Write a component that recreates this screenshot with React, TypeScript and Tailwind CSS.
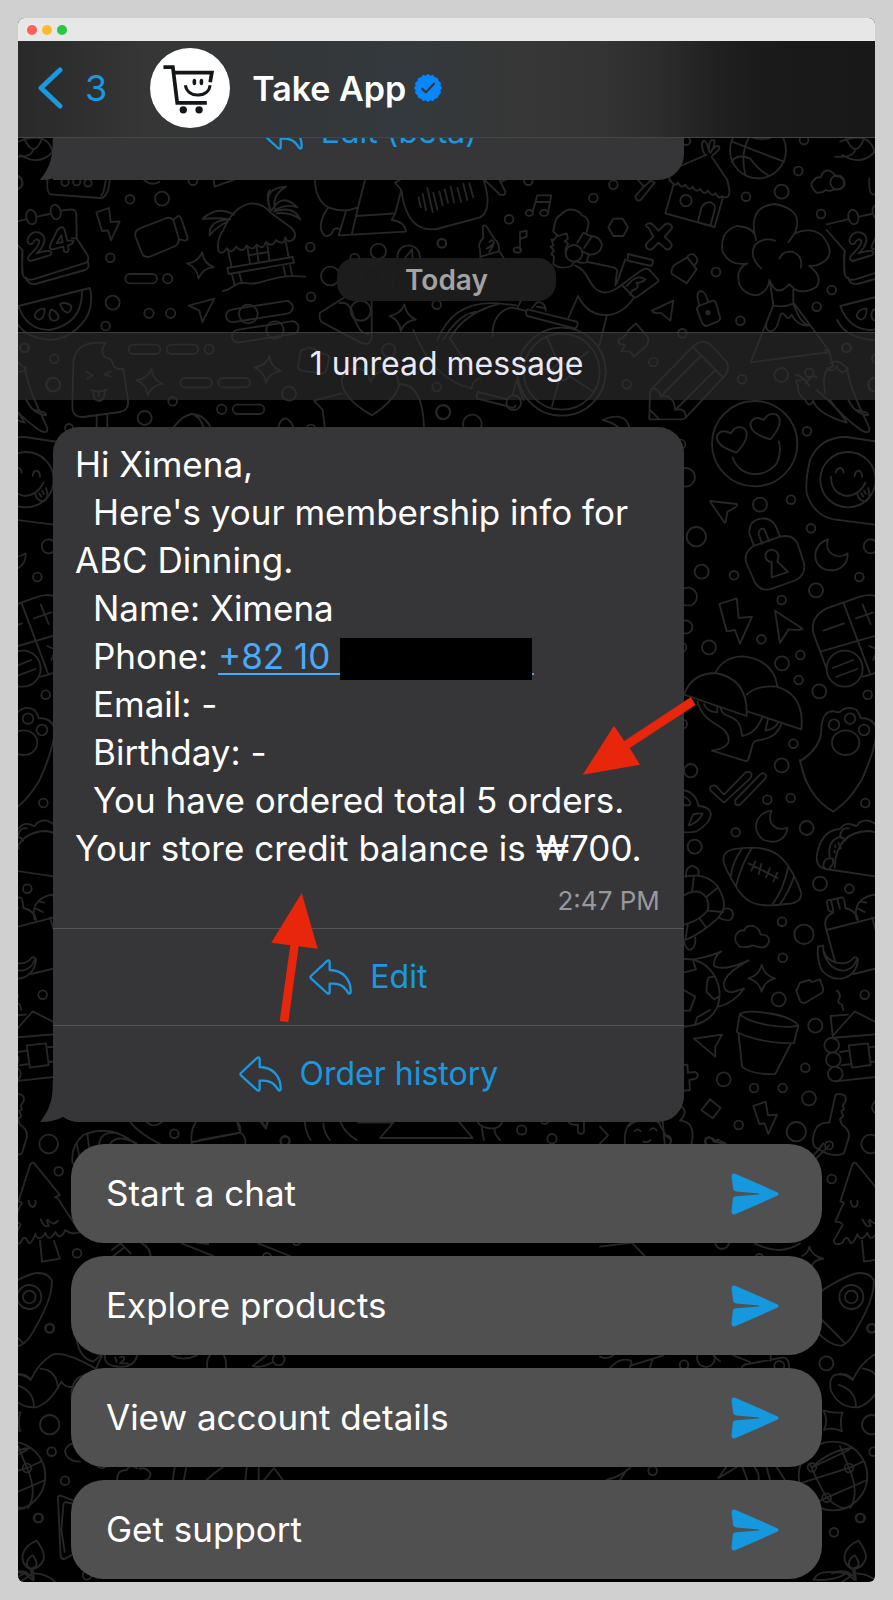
import type { ReactNode } from "react";

const SUGGESTIONS = ["Start a chat", "Explore products", "View account details", "Get support"];

function ReplyIcon() {
  return (
    <svg viewBox="328 235 129 108" className="h-9 w-[43px] shrink-0" fill="none" stroke="currentColor" strokeWidth="7" strokeLinejoin="round" aria-hidden="true">
      <path d="M334 286 L382 241 Q389 236 390 244 V268 C430 268 454 298 453 334 Q451 343 445 336 C430 311 414 308 390 309 V334 Q389 342 382 337 L334 293 Q331 290 334 286 Z" />
    </svg>
  );
}

function SendIcon() {
  return (
    <svg viewBox="396 278 142 125" className="h-[42px] w-12 shrink-0" fill="#1598de" aria-hidden="true">
      <path d="M397 287 Q398 277 408 280 L533 335 Q542 340 533 346 L408 401 Q398 404 397 394 L401 355 Q402 347 411 347 L478 342 Q481 340 478 339 L411 333 Q403 332 402 325 Z" />
    </svg>
  );
}

function VerifiedIcon() {
  const points = Array.from({ length: 32 }, (_, i) => {
    const r = i % 2 ? 36.5 : 40.5;
    const a = (i * Math.PI) / 16;
    return `${(42 + r * Math.sin(a)).toFixed(1)},${(42 - r * Math.cos(a)).toFixed(1)}`;
  }).join(" ");
  return (
    <svg viewBox="0 0 84 84" className="size-7 shrink-0" role="img" aria-label="Verified">
      <polygon points={points} fill="#0787fe" stroke="#0787fe" strokeWidth="3" strokeLinejoin="round" />
      <path d="M24 44 L36 55 L60 29" fill="none" stroke="#31393d" strokeWidth="6.5" strokeLinecap="round" strokeLinejoin="round" />
    </svg>
  );
}

function Logo() {
  return (
    <svg viewBox="453 145 238 238" className="size-20 shrink-0" aria-hidden="true">
      <circle cx="572" cy="264" r="119" fill="#fff" />
      <g fill="none" stroke="#14171a" strokeWidth="11">
        <path d="M493 202 H521 L534 308 H622" />
        <path d="M524 218 H637 L632 247" />
        <path d="M558 256 C562 276 577 286 597 285 C618 284 630 272 632 256" strokeWidth="9" />
      </g>
      <g fill="#14171a">
        <ellipse cx="585" cy="246" rx="5.5" ry="9.5" />
        <ellipse cx="606" cy="246" rx="5.5" ry="9.5" />
        <circle cx="552" cy="329" r="11" />
        <circle cx="599" cy="329" r="11" />
      </g>
    </svg>
  );
}

function Tail() {
  return (
    <svg viewBox="121 0 120 123" className="absolute bottom-0 -left-[13px] h-[41px] w-10" fill="#363638" aria-hidden="true">
      <path d="M159 0 C160 60 150 85 121 123 Q165 122 191 107 Q212 123 240 123 V0 Z" />
    </svg>
  );
}

/* Doodles are drawn in thirds of a pixel; each patch is placed by its origin. */
function Patch({ x, y, children }: { x: number; y: number; children: ReactNode }) {
  return <g transform={`translate(${x} ${y}) scale(.33333)`}>{children}</g>;
}

function Rings({ at }: { at: number[][] }) {
  return (
    <>
      {at.map(([cx, cy, r], i) => (
        <circle key={i} cx={cx} cy={cy} r={r} />
      ))}
    </>
  );
}

function Spark({ x, y, a = 8 }: { x: number; y: number; a?: number }) {
  return <path transform={`translate(${x} ${y}) rotate(${a})`} d="M0 -40 Q8 -8 40 0 Q8 8 0 40 Q-8 8 -40 0 Q-8 -8 0 -40 Z" />;
}

function Pill({ x, y, a = 0, w = 95 }: { x: number; y: number; a?: number; w?: number }) {
  return <rect transform={`translate(${x} ${y}) rotate(${a})`} x="0" y="0" width={w} height="28" rx="14" />;
}

function Doodles() {
  return (
    <svg
      viewBox="18 138 857 1444"
      preserveAspectRatio="xMidYMin slice"
      className="absolute inset-0 -z-10 h-full w-full"
      fill="none"
      stroke="#272727"
      strokeWidth="5.5"
      strokeLinecap="round"
      strokeLinejoin="round"
      aria-hidden="true"
    >
      <g id="doodles">
        <Patch x={0} y={180}>
          <path d="M142 -5 Q140 42 152 43 L300 54 Q326 54 330 -8 M318 -5 Q312 40 304 46 M55 -115 Q140 -150 158 -85 Q120 -40 60 -75 M70 -130 Q100 -60 125 -122 M40 -70 Q90 -65 100 -90" />
          <Rings at={[[195, 7, 11], [230, 5, 11], [264, 9, 11], [46, 7, 21], [390, 58, 13], [486, 56, 21], [331, 233, 13], [503, 296, 14], [338, 368, 21], [447, 400, 14], [512, 400, 14], [317, 438, 13], [931, 201, 13], [933, 350, 13], [991, 288, 28], [1135, 214, 23], [1064, 234, 13], [1326, 190, 13], [1310, 374, 13], [579, 2, 13], [73, 503, 13], [163, 536, 13], [159, 614, 21], [627, 508, 14], [518, 664, 13], [434, 714, 21], [665, 688, 14], [867, 641, 21], [1166, 511, 20], [1310, 621, 13], [1329, 697, 21], [207, 744, 12]]} />
          <path d="M425 -8 Q450 22 478 5 M640 -8 L644 20 L705 -2 M810 30 Q795 45 812 92" />
          <path d="M14 133 L77 118 M112 110 L148 102 M184 92 L215 88 Q229 90 229 102 L230 175 L262 225 Q270 240 258 248 L100 298 Q68 305 66 270 L68 212 M68 212 L14 150 M78 292 Q84 316 106 312 L255 270 Q270 263 264 245 M68 212 Q64 235 68 280 M215 175 L230 175" />
          <ellipse cx="94" cy="111" rx="15" ry="22" transform="rotate(-12 94 111)" />
          <ellipse cx="167" cy="96" rx="15" ry="22" transform="rotate(-12 167 96)" />
          <path d="M82 180 Q92 150 118 158 Q145 170 124 205 L110 220 Q145 210 152 214 Q158 224 148 226 L92 243 Q78 240 88 226 Q120 196 118 182 Q108 172 98 190 Q84 198 82 180 Z M190 142 Q176 140 168 158 L150 196 Q146 208 160 208 L190 200 L192 214 Q204 222 206 208 L204 196 Q222 192 220 182 L202 182 L194 150 Z M170 190 L184 166 L188 186 Z" />
          <path d="M289 97 L327 84 L332 126 L359 124 L333 181 L324 151 L306 153 Z" />
          <path d="M420 145 L500 114 Q515 110 521 124 L536 174 Q538 190 526 198 L450 230 Q432 234 426 220 L406 168 Q403 152 420 145 Z M519 120 L534 108 Q540 106 543 114 L562 170 Q564 180 556 182 L538 178" />
          <Spark x={601} y={256} />
          <Pill x={376} y={282} />
          <path d="M55 378 L270 324 Q284 390 245 432 Q180 505 90 465 Q60 450 45 420 M55 378 Q80 450 150 450 Q248 430 246 332 M104 405 Q112 385 134 386 Q134 415 118 419 Q104 416 104 405 Z M154 388 Q176 396 176 414 Q168 426 154 420 Q142 408 154 388 Z M180 372 Q200 364 214 378 Q214 396 202 398 Q186 392 180 372 Z" />
          <path d="M656 215 Q648 180 670 150 Q700 80 752 70 Q790 70 812 98 L876 145 Q894 165 878 180 Q860 190 856 172 Q852 200 828 180 Q818 205 798 186 Q790 212 770 194 Q758 215 740 196 Q728 222 708 200 Q695 225 680 205 Q668 225 656 215 Z M702 104 Q650 75 608 117 Q650 112 690 118 M690 118 Q625 120 629 166 Q650 140 680 126 M812 90 Q785 25 858 20 Q815 45 825 85 M815 92 Q845 35 892 82 Q860 70 825 90 M822 95 Q880 75 901 118 Q870 95 830 100" />
          <path d="M684 210 L695 262 M682 264 L878 231 L882 248 L686 282 Z M857 184 L866 232 M742 200 L750 250 M802 192 L808 242 M770 200 L776 246 M745 226 L806 216 M696 284 L704 314 M718 280 L726 310 M850 258 L856 286 M870 254 L876 286 M668 333 C700 330 700 302 745 310 S810 280 916 290" />
          <path d="M566 377 L643 356 L607 426 L598 392 Z" />
          <g transform="rotate(-9 745 402)">
            <rect x="678" y="381" width="202" height="38" rx="19" />
            <circle cx="745" cy="402" r="28" />
          </g>
          <g transform="rotate(-9 825 450)">
            <rect x="694" y="432" width="202" height="38" rx="19" />
            <circle cx="825" cy="450" r="26" />
          </g>
          <path d="M945 -4 Q945 60 985 82 Q1030 100 1074 82 L1096 -4 M1074 82 L1056 160 M1038 92 L1016 166 L1218 155 Q1215 125 1175 120 L1186 100 L1070 108 M985 82 Q945 140 975 168 Q995 170 1000 150 Q1010 140 1022 150 M1186 100 L1204 30 L1185 8 L1205 -4 M1204 30 Q1220 160 1310 147 L1440 112 Q1480 90 1450 -4" />
          <path d="M1256 52 L1262 82 M1268 42 L1278 90 M1282 24 L1298 96 M1300 38 L1312 88 M1318 34 L1328 76 M1334 28 L1344 68 M1352 20 L1362 68 M1372 24 L1384 66 M1390 12 L1402 60 M1408 10 L1420 52" />
          <path d="M1080 296 L1114 250 L1150 290 L1120 330 Z M1180 330 Q1170 280 1200 250 M1192 232 Q1194 196 1230 196 Q1262 202 1260 240 M1210 240 L1236 208 L1238 236" />
          <path d="M960 398 L1040 348 M960 398 Q955 420 968 428 L1082 488 Q1112 500 1115 470 V364 M1018 370 Q1040 362 1055 390 Q1075 470 1110 460" />
          <circle cx="1082" cy="392" r="30" />
          <Spark x={1208} y={413} />
          <Spark x={449} y={606} />
          <Spark x={803} y={568} />
          <Pill x={386} y={494} />
          <Pill x={500} y={494} />
          <Pill x={541} y={594} />
          <Pill x={655} y={594} />
          <Pill x={698} y={674} />
          <path d="M220 545 Q228 480 316 489 Q298 515 315 532 Q338 535 340 556 Q350 572 370 566 L384 660 Q388 690 360 696 L250 711 Q218 712 217 680 Z M290 710 V750 M322 706 V750 M260 576 L278 586 L262 596 M332 574 L314 584 L332 590 M272 630 Q296 640 322 628 M280 634 Q280 664 298 663 Q316 660 314 630 M297 636 V648" />
          <path d="M894 558 L902 515 Q905 506 916 508 L924 502 L952 510 L956 518 L980 524 Q990 528 988 536 L978 572 Q974 582 962 580 L906 572 Q893 568 894 558 Z" />
          <path d="M1116 706 Q1025 655 1025 600 Q1035 560 1080 566 Q1100 570 1112 606 Q1125 570 1160 572 Q1200 580 1196 620 Q1180 665 1116 706 Z M1026 640 L942 662 L968 690 L974 740 M1198 612 Q1268 612 1272 740 M522 740 Q550 705 575 702 Q600 710 610 740 M570 702 Q610 702 630 738 M836 740 Q842 712 862 716 Q874 725 880 740 M922 738 Q932 730 944 738" />
        </Patch>

        <Patch x={440} y={180}>
          <Rings at={[[265, 2, 13], [520, 14, 13], [460, 54, 13], [207, 118, 13], [5, 190, 13], [918, 50, 13], [1025, 35, 21], [1143, 102, 13], [828, 276, 13], [1175, 330, 13], [1130, 380, 13], [901, 422, 13], [727, 460, 13], [1220, 503, 13], [640, 546, 13], [560, 613, 13], [906, 598, 13], [1024, 585, 21], [1108, 578, 13], [1306, 614, 20], [10, 696, 21], [97, 732, 28], [739, -117, 12], [1092, -120, 13], [1075, -27, 13], [738, 62, 17]]} />
          <path d="M130 -4 L180 44 Q198 48 196 34 L158 -40 M182 6 L204 -4 M590 -4 L612 20 L586 48 Q588 66 602 60 L644 8 L620 -4 M612 20 L630 4" />
          <path d="M278 95 L292 46 H334 L324 98 M290 66 H330" />
          <ellipse cx="268" cy="99" rx="11" ry="9" />
          <ellipse cx="312" cy="99" rx="12" ry="9" />
          <path d="M240 208 V156 L260 152 V170 L242 176" />
          <ellipse cx="232" cy="210" rx="11" ry="8" />
          <path d="M520 116 H548 L564 142 L550 168 H520 L505 142 Z" />
          <path d="M626 144 Q612 136 622 132 Q632 126 640 136 L656 152 L674 134 Q684 126 694 136 Q700 144 690 152 L674 170 L692 188 Q700 198 688 206 Q680 212 672 202 L656 188 L640 204 Q630 214 620 204 Q614 196 622 188 L640 170 Z" />
          <path d="M700 16 L676 100 L824 141 L848 54 M774 124 L784 84 Q796 62 815 68 Q828 76 824 90 L812 134 M690 0 Q704 22 714 8 Q724 28 736 14 Q748 36 758 20 Q770 40 780 26 Q792 48 804 32 Q816 52 826 40 Q838 60 846 48 Q870 62 868 28 L862 0 L815 -70 M800 -76 L722 -42 M688 -6 Q686 0 690 4 M795 -74 Q778 -110 792 -118 Q800 -118 808 -84 Q804 -124 822 -120 Q828 -108 812 -82 Q826 -108 838 -100 Q842 -92 818 -74" />
          <circle cx="954" cy="-89" r="84" />
          <path d="M876 -115 L1032 -55 M916 -15 Q900 -80 928 -130 M875 -55 Q890 -80 930 -65 Q955 -30 985 -14 M930 -130 Q965 -115 1000 -130" />
          <path d="M1130 38 Q1105 18 1120 2 Q1128 -10 1142 -8 Q1150 -32 1168 -28 Q1184 -20 1186 -12 Q1212 -12 1214 12 Q1208 32 1182 28 Q1168 36 1158 30 Q1146 40 1130 38 Z" />
          <path d="M948 180 Q920 80 1005 72 Q1095 90 1064 160 L1045 187 M1064 160 Q1110 140 1145 165 Q1200 230 1130 256 L1108 258 M1108 258 Q1150 290 1130 320 Q1090 345 1062 326 L1048 312 Q1020 345 1000 322 L988 300 Q985 335 950 346 Q890 340 895 280 Q905 255 922 250 Q870 260 848 215 Q838 155 890 138 Q930 140 942 160 M964 266 Q925 230 945 195 Q970 170 1005 182 M1018 236 Q1030 210 1060 216 Q1090 230 1082 263 M990 306 L1000 376 M1060 328 V374 M1000 376 Q1030 384 1062 370 L1170 516 L932 547 L1000 376 M1062 374 Q1080 430 1108 436 Q1072 440 1055 404 Q1044 425 1034 404 Q1022 395 1020 410 Q1010 455 990 454 Q975 450 980 428" />
          <path d="M340 155 Q345 110 362 105 Q385 78 415 95 Q425 100 424 105 Q452 115 444 140 L440 156 M340 155 L355 168 L380 160 L384 176 L374 184 L384 190 L376 210 M350 168 L342 180 L334 178 L340 196 L332 200 L342 212 L334 222 L342 230 L340 252 Q360 270 395 258 L402 244 M412 188 L430 158 L455 170 L432 204 M455 168 Q482 170 486 196 Q480 225 448 224 L428 215 M446 226 L440 246 Q430 252 408 244" />
          <circle cx="402" cy="220" r="25" />
          <path d="M404 256 C450 270 445 335 495 338 C530 335 545 310 610 268 Q625 262 632 274 L652 296 Q660 302 650 308 L592 350 Q582 356 576 346 L546 315 M444 246 L520 262 Q536 268 530 280 L526 316 M530 310 L556 238 M564 222 L638 240 Q642 244 634 258 L562 242 Z M385 414 L414 348 C450 420 530 425 580 356 M560 318 Q590 280 616 298 Q606 310 590 308 Q600 325 578 330 L570 344" />
          <path d="M128 140 Q138 130 146 150 L164 178 Q180 190 176 214 L122 230 M128 140 L130 174 Q112 190 120 208 L122 250 M148 186 Q160 174 162 190 L140 206 L160 196 L148 216 M180 216 L200 250" />
          <path d="M702 256 L742 232 L770 268 L740 310 L696 282 Q690 272 702 256 Z M740 234 Q748 218 762 224 Q776 236 770 248 L762 258" />
          <path d="M776 378 L818 362 Q826 362 828 370 L840 412 Q842 420 834 424 L800 438 Q790 438 786 428 L770 386 Z M778 376 L772 350 Q772 332 786 334 Q796 336 804 364" />
          <circle cx="804" cy="398" r="5" fill="#272727" />
          <path d="M636 392 L700 362 L691 422 L662 398 Q640 402 636 392 Z" />
          <path d="M536 490 Q532 476 548 474 Q560 462 566 450 L588 430 L622 470 Q630 484 618 498 L582 530 L570 514 L544 514 L556 496 Z" />
          <path d="M-8 480 Q40 360 175 370 L230 376 M10 478 Q60 396 115 395 M30 476 Q70 400 175 372 M158 470 V450 Q165 395 215 382 L255 392 M262 388 L410 425 Q418 432 406 446 L262 408 Q254 400 262 388 Z M276 384 L290 368 Q302 362 314 376 L318 392 M290 380 L314 384" />
          <circle cx="365" cy="575" r="132" />
          <circle cx="365" cy="575" r="114" />
          <circle cx="365" cy="575" r="26" />
          <path d="M355 550 L322 474 M386 560 L446 514 M388 588 L456 632 M358 600 L336 678 M340 570 L250 560 M500 408 L478 496 M232 384 L270 306 M30 476 L100 580 M-80 450 Q-20 600 95 625 M95 625 Q98 600 120 596 M114 636 L202 658 M112 656 L200 678 Q226 690 226 676 M114 636 Q106 650 112 656 M218 644 L230 600 L250 660" />
          <circle cx="221" cy="668" r="22" />
          <path d="M636 626 L758 500 Q785 476 810 492 L860 546 Q872 568 850 592 L738 712 Q734 718 722 718 L630 718 Q626 716 628 706 L630 640 Q632 628 636 626 Z M758 500 L850 594 M780 530 L662 650 M824 572 L706 690 M636 626 Q660 626 662 650 Q700 640 706 690 Q736 682 738 712 M630 690 L656 716" />
          <path d="M488 720 Q560 690 570 750 M488 720 Q530 730 540 750" />
        </Patch>

        <Patch x={660} y={400}>
          <Rings at={[[441, 94, 13], [300, 314, 21], [393, 299, 13], [453, 385, 13], [109, 410, 29], [125, 515, 21], [222, 526, 13], [77, 232, 28], [84, 590, 27], [77, 681, 20], [65, 742, 14], [62, 133, 14], [598, 531, 13], [632, 439, 21], [468, 571, 21], [365, 600, 13], [304, 718, 13], [147, 742, 21], [421, 765, 13], [366, 790, 21], [416, 840, 13], [478, 874, 21], [623, 884, 13], [400, 1031, 13], [365, 1096, 21], [67, 972, 14], [92, 1112, 20]]} />
          <circle cx="284" cy="131" r="128" />
          <path d="M230 158 C190 145 165 130 172 105 Q185 85 213 100 Q225 75 250 84 C268 95 262 125 230 158 Z M331 118 C295 108 268 92 272 68 Q285 45 311 60 Q325 35 350 44 C368 58 360 85 331 118 Z M218 172 C235 230 310 240 350 190 Q365 160 357 124" />
          <path d="M408 -75 Q430 -72 448 -42 M470 -68 Q458 -80 436 -50 Q440 -70 420 -58 Q400 -64 414 -44 Q410 -20 436 0 Q446 26 460 2 Q470 40 560 68 Q540 30 470 -30 M496 -20 Q480 -90 520 -102 L506 -148 Q496 -152 494 -148 M500 -96 Q518 -80 530 -100 Q545 -70 565 -96 L552 -102 Q535 -125 510 -110 M560 -96 C575 -20 600 20 628 84 Q630 104 606 92 C560 60 530 30 510 0 M565 0 Q580 30 602 40 Q635 52 620 38 L592 30" />
          <path d="M700 132 L560 111 Q480 110 450 180 Q435 245 440 280 Q460 345 520 358 L790 392" />
          <circle cx="564" cy="239" r="83" />
          <path d="M527 218 Q530 204 542 204 Q550 206 551 218 M584 228 Q586 212 597 212 Q606 216 606 230 M513 230 Q514 280 560 288 Q600 285 616 248 M592 282 Q596 304 618 304 Q635 294 624 264 M604 280 L610 290 M612 272 L618 282" />
          <path d="M151 303 L230 312 Q234 316 226 322 L202 336 L197 366 Q194 370 190 362 L151 306 Z" />
          <path d="M282 438 L268 400 Q266 362 302 356 Q335 352 348 380 L360 410 M306 432 L296 402 Q296 384 312 386 L328 424 M280 438 L360 410 Q405 400 416 440 L432 490 Q438 525 408 540 L330 568 Q300 574 284 546 L258 486 Q252 456 280 438 Z M335 486 Q316 484 316 464 Q322 448 340 450 Q360 458 354 476 L352 484 L384 516 L335 532 Z" />
          <path d="M504 418 C460 430 450 490 495 508 C540 520 565 490 563 460 C530 485 490 455 504 418 Z" />
          <path d="M178 612 L230 595 L236 654 L276 650 L240 731 L225 690 L200 694 Z" />
          <path d="M345 632 L428 686 Q426 692 386 688 L360 729 Z" />
          <path d="M500 806 L460 700 Q450 650 500 625 L600 590 Q650 575 680 610 L720 715 Q726 735 712 742 Q700 810 608 830 M484 754 L706 690 M551 610 L630 820 M490 692 L552 670 M588 655 L640 637 M608 614 L632 672 M628 738 L680 762 M640 780 L655 740" />
          <circle cx="554" cy="806" r="54" />
          <path d="M518 804 L580 780 M528 831 L592 807" />
          <path d="M166 818 Q190 770 250 769 Q340 780 352 858 M72 884 Q95 820 165 819 Q265 835 260 948 Z M260 884 Q290 855 350 860 Q435 885 424 988 L262 934 M112 904 C130 980 210 970 206 1025 Q200 1045 156 1052 L255 1083 Q262 1085 266 1075 C285 1020 270 1025 310 1018 Q350 1010 364 974 M132 912 Q140 936 172 937 V922 M182 924 C190 965 240 930 246 1008 Q290 1000 308 948 M324 958 L316 992 Q345 988 354 968" />
          <path d="M436 1140 L420 1084 Q488 1040 484 980 Q490 930 522 934 Q535 938 540 936 Q560 915 590 930 Q600 945 602 954 Q640 954 650 985 Q650 1040 605 1140 C565 1205 545 1215 520 1235 Q440 1190 420 1080" />
          <circle cx="522" cy="974" r="16" />
          <circle cx="570" cy="956" r="16" />
          <circle cx="612" cy="990" r="16" />
          <ellipse cx="557" cy="1028" rx="41" ry="37" />
        </Patch>

        <Patch x={660} y={760}>
          <Rings at={[[322, 119, 13], [392, 114, 13], [616, 129, 13], [227, 217, 13], [440, 204, 21], [104, 260, 21], [480, 371, 21], [568, 386, 13], [366, 485, 13], [432, 523, 29], [368, 593, 13], [614, 704, 13], [356, 718, 21], [466, 797, 21], [436, 923, 13], [191, 958, 21], [282, 984, 13], [368, 984, 13], [447, 1015, 21], [236, 1095, 13], [409, 1115, 29], [632, 1152, 28], [656, 1042, 20]]} />
          <path d="M152 92 Q146 78 160 76 Q168 76 172 82 L192 104 L256 38 Q266 32 274 40 Q276 50 270 56 L192 128 Z M226 120 L300 44 Q310 34 318 46 Q320 54 310 62 L244 130 Q234 140 226 132 Z" />
          <path d="M60 90 Q105 90 116 138 Q150 140 153 162 Q150 190 110 214 Q80 220 60 214 M60 105 Q90 115 92 132 Q85 142 60 130 M86 195 L100 162 L128 160 Q120 182 92 195 Z" />
          <path d="M334 152 C280 160 275 220 312 240 C350 255 380 235 382 203 C350 215 320 195 334 152 Z" />
          <path d="M192 310 Q180 268 240 265 Q320 255 360 290 C385 312 410 355 424 400 Q424 430 380 432 C290 445 255 430 225 375 Q200 335 192 310 Z M246 266 Q215 310 212 350 M276 264 Q245 310 228 378 M384 324 Q370 390 338 432 M402 350 Q385 400 360 432 M266 310 L352 354 M286 304 L274 332 M304 312 L296 342 M330 324 L318 352 M352 338 L340 364" />
          <path d="M60 350 L110 346 Q150 350 172 378 Q195 415 192 440 Q185 470 150 495 Q100 535 60 545 M66 410 Q95 390 120 396 Q150 412 144 450 Q120 480 84 490 L60 498 M78 350 Q76 322 96 317 Q120 322 116 348 M188 450 Q205 438 218 455 Q222 472 210 480 Q200 484 178 474 M72 545 Q80 574 94 568 Q108 560 106 532 M102 348 L96 394 M172 384 L140 410 M190 456 L140 452 M138 502 L118 474 M84 490 L76 540" />
          <path d="M240 560 Q220 545 228 524 Q238 508 252 512 Q260 494 280 498 Q298 504 302 524 Q328 522 327 545 Q320 564 302 562 Q284 558 276 556 Q262 564 240 560 Z" />
          <path d="M497 327 Q460 320 474 270 Q490 210 540 207 C570 170 590 215 595 190 Q620 170 650 195 Q720 190 735 210 M524 322 Q530 215 625 213 Q720 225 752 365 L497 327 L490 318 M540 228 Q545 200 566 205 M510 295 Q500 245 535 232 Q550 230 556 242 M490 320 Q490 290 518 296 Q524 310 510 324 M526 256 V262 M536 248 V254 M524 272 V278 M542 262 V266" />
          <path d="M526 608 L498 505 Q488 470 520 458 L506 452 L500 426 Q502 418 512 420 L546 412 Q554 412 556 444 Q590 452 594 480 M500 510 L735 450 M514 424 L520 452 M532 418 L540 446 M590 478 Q575 420 640 404 Q680 420 690 460 M600 424 L620 428 M594 446 L614 456 M636 472 L650 520 M580 642 L720 608" />
          <path d="M474 560 L490 556 V572 C505 615 560 620 580 594 Q588 588 594 598 C590 660 520 675 485 630 Q470 600 474 560 Z M490 575 C510 640 570 650 590 600" />
          <path d="M60 598 Q130 590 165 650 Q190 700 170 745 Q140 800 60 800 M100 598 Q150 590 184 574 Q160 590 162 618 Q190 635 266 601 Q195 640 192 670 Q190 695 215 697 L252 686 Q220 730 175 740 M60 640 L108 628 L98 600 M146 652 L165 650 M146 652 Q138 670 140 696 L162 718 L178 710 M60 684 L106 710 L90 752 L60 752 M106 790 L112 772 L150 750" />
          <Spark x={305} y={655} a={0} />
          <path d="M410 692 L420 668 L448 660 L456 666 L480 658 L490 688 Q490 698 480 702 L436 728 Q426 732 420 722 L408 690 Z" />
          <path d="M530 692 Q545 700 537 718 Q530 728 546 734 L550 750 M512 768 L564 764 M512 768 L518 828 L584 754 L710 818 L512 834 M540 876 L566 872 M544 916 L572 912 M566 856 L624 850 L632 915 L576 923 Z M628 862 L690 855 M632 906 L695 900 M526 964 L700 945" />
          <Rings at={[[515, 856, 22], [520, 899, 22], [526, 942, 22]]} />
          <path d="M240 762 Q260 748 340 762 Q400 775 415 796 Q400 805 330 796 Q260 785 240 762 Z M240 762 L230 816 Q300 850 402 850 L415 796 M236 824 L246 920 Q275 945 346 942 L392 852" />
          <path d="M102 836 L186 824 L166 860 V890 Z" />
          <path d="M60 916 L82 914 L84 938 L106 936 Q120 944 108 956 L88 960 L90 990 L60 994" />
          <path d="M150 1018 L182 1044 L158 1075 L124 1050 Z M280 1038 L317 1025 L324 1066 L351 1064 L325 1122 L314 1090 L298 1092 Z" />
          <path d="M60 1036 Q88 1055 60 1082 Q108 1085 95 1150 M-8 1082 L20 1130 Q40 1138 30 1152 M136 1150 Q132 1132 146 1132 Q160 1136 160 1144 L175 1138 M160 1144 L196 1152" />
          <path d="M508 1088 L526 1006 Q532 998 548 1004 Q562 1008 556 1026 L548 1036 L552 1048 L544 1054 L550 1068 L540 1078 L546 1094 Q572 1110 566 1134 L552 1180 Q530 1190 500 1180 L465 1162 Q450 1140 470 1102 Q485 1086 508 1088 Z M508 1156 L470 1194 M490 1150 L460 1188" />
          <circle cx="507" cy="1156" r="12" />
        </Patch>

        <Patch x={0} y={1080}>
          <Rings at={[[176, 274, 13], [231, 520, 13], [148, 745, 13], [149, 1034, 29], [155, 1115, 13], [195, 1202, 13], [114, 1314, 13], [523, 161, 13], [855, 183, 13], [801, 532, 13], [261, 1486, 13], [88, 651, 36], [88, 651, 19]]} />
          <path d="M101 248 Q92 246 88 262 L55 365 Q72 366 62 375 L40 425 Q58 425 62 435 L35 482 Q38 500 62 488 Q72 462 82 482 Q90 504 106 462 Q118 490 136 458 Q146 490 166 456 Q180 484 196 450 Q215 466 240 456 L184 372 Q172 350 165 352 L180 345 Z M86 362 Q88 380 98 381 Q110 378 106 362 M122 418 Q132 444 146 438 Q138 418 144 420 Q160 440 174 422 M120 482 L126 545 L180 536 L162 482" />
          <path d="M218 250 Q210 200 250 165 Q330 130 405 190 M230 190 L240 240 M262 160 Q265 200 275 230 M298 192 Q300 155 350 158 M330 192 Q350 160 410 190 M388 122 Q410 155 480 192 M436 122 Q460 150 490 122 M575 192 Q570 150 590 122 M578 186 L722 158 Q710 130 712 122 M722 158 Q738 170 736 192 M785 122 L797 145 L802 122" />
          <path d="M62 596 Q130 560 155 600 Q160 650 105 745 Q85 785 60 797 Q30 798 0 770 L-60 715 Q-50 650 62 596 Z M0 720 L70 790 M-60 745 Q-70 800 -30 790" />
          <path d="M52 882 Q80 880 92 900 Q115 850 155 825 Q190 810 290 868 M92 900 Q70 880 42 884 Q20 890 26 930 Q50 985 108 982 Q150 970 184 905 Q198 925 220 920 M122 866 Q170 870 174 925 M50 915 Q100 930 102 978 M215 960 Q210 890 260 885" />
          <path d="M230 780 Q240 835 280 845 L302 826 M288 866 L306 826 M315 826 Q310 850 340 858 Q400 870 412 826 M345 832 L350 846 M360 832 Q375 825 372 840 L360 850 L384 850 M515 826 Q550 846 590 826 M622 866 Q618 840 630 826 M678 866 Q680 840 672 826 M758 858 L800 826 M758 858 Q780 866 820 846" />
          <circle cx="836" cy="838" r="18" />
          <path d="M336 510 L362 490 L392 520 M340 528 L370 505 M425 490 Q448 500 452 528 M545 490 L640 528 M590 488 L625 492 M775 490 L870 528 M880 492 Q890 500 900 490" />
          <path d="M195 1115 Q200 1090 225 1090 M195 1115 Q202 1145 240 1145 M295 1162 Q305 1168 315 1162 M352 1200 Q350 1170 380 1170 Q390 1150 410 1164 M418 1166 Q440 1160 452 1182 Q450 1200 432 1202 M518 1200 L524 1164 M552 1200 L558 1164 M620 1200 Q640 1180 668 1162 M740 1164 L736 1200 M776 1164 V1200 M792 1200 L822 1164 L848 1200" />
          <path d="M220 1262 L182 1247 Q172 1246 174 1258 L182 1430 Q186 1440 196 1436 L220 1422 M222 1272 L196 1266 Q190 1268 190 1276 L184 1350 L194 1416" />
          <path d="M110 1382 Q138 1420 130 1440 Q118 1466 92 1468 Q64 1455 68 1425 Q76 1395 110 1382 Z M98 1426 Q115 1448 108 1458 Q94 1472 82 1458 Q76 1440 98 1426 Z M92 1468 L98 1500 M30 1480 Q70 1465 90 1486 L60 1506 M100 1480 Q140 1480 165 1506" />
        </Patch>

        <Patch x={600} y={1080}>
          <Rings at={[[695, 297, 13], [816, 745, 13], [679, 850, 21], [782, 1314, 13], [702, 1357, 13], [252, 854, 13], [158, 1172, 13], [538, 858, 15], [366, 486, 21], [478, 534, 12], [318, 834, 27], [636, 1162, 13], [747, 1164, 13], [680, 1253, 13]]} />
          <path d="M75 192 Q70 140 100 122 M188 122 L194 190 M84 140 Q130 100 180 130 M104 154 Q112 142 122 154 M150 150 Q160 138 170 152 M130 184 Q142 190 152 180 M194 168 Q212 162 214 184 M0 140 L24 166 L0 190 M318 190 Q314 170 330 172 Q346 176 344 186 L356 180 L376 190" />
          <path d="M0 500 L96 488 L134 528 M465 490 Q540 530 600 490 M606 528 Q625 520 628 500 Q636 528 670 536 Q640 540 634 560" />
          <path d="M0 830 Q20 840 40 826 M30 864 Q60 830 92 842 Q98 850 90 862 M90 858 L190 826 M150 862 L158 838 M400 826 L450 846 M426 862 Q430 852 445 852 L550 832 Q566 834 568 862 M512 842 V826 M340 826 L360 844" />
          <circle cx="699" cy="1188" r="103" />
          <path d="M636 1162 Q690 1110 757 1104 M636 1162 L747 1110 M630 1152 Q650 1200 680 1253 M720 1098 L747 1164 Q780 1240 750 1284 M600 1210 L747 1164 L790 1144 M680 1253 L802 1200 M680 1253 Q720 1290 740 1284 M680 1253 L640 1272" />
          <path d="M670 992 Q700 1000 728 997 Q718 1020 726 1054 Q700 1040 672 1050 Q686 1020 670 992 Z" />
          <path d="M20 1200 Q60 1190 90 1164 M60 1200 L80 1170 M355 1194 L410 1162 M355 1194 L378 1162 M428 1162 L442 1200 M464 1162 Q478 1180 476 1200 M500 1162 L510 1200 M530 1162 L555 1200" />
          <path d="M642 1500 Q650 1465 740 1480 L764 1500 M764 1468 L768 1500 M640 1498 Q700 1506 740 1480" />
        </Patch>

        <Patch x={200} y={880}>
          <path d="M112 724 Q125 740 120 758 L0 780 M180 724 L198 746 L204 724 M314 724 Q318 760 332 780 M370 730 Q372 760 390 780 M420 724 Q435 760 470 780 M475 728 H580 L540 774 H818 L776 724 M832 724 Q840 744 880 746 Q905 740 906 724 M845 744 L852 780 M885 746 Q880 760 900 780 M1105 724 Q1110 736 1134 734 V756 Q1142 768 1152 756 V724" />
          <Rings at={[[965, 750, 14], [1034, 720, 12], [1056, 776, 14], [255, 782, 14]]} />
        </Patch>
      </g>
      <use href="#doodles" x="-822" />
      <use href="#doodles" x="822" />
    </svg>
  );
}

function ReplyButton({ children }: { children: ReactNode }) {
  return (
    <button type="button" className="flex h-[97px] w-full shrink-0 items-center justify-center gap-[18px] border-t border-[#545456] text-[32px] leading-10 text-[#1a98e0]">
      <ReplyIcon />
      {children}
    </button>
  );
}

export default function App() {
  return (
    <div className="min-h-screen bg-[#d0d0d0] p-[18px] font-['Inter','Noto_Sans',sans-serif]">
      <div className="overflow-hidden rounded-md bg-black">
        <div className="flex h-[23px] items-center gap-[5px] bg-[#e7e7e7] px-[9px]">
          <span className="size-[10px] rounded-full bg-[#fe5f57]" />
          <span className="size-[10px] rounded-full bg-[#febb2e]" />
          <span className="size-[10px] rounded-full bg-[#28c840]" />
        </div>

        <header className="flex h-[97px] items-center border-b border-[#454547] bg-[linear-gradient(90deg,#292929_0%,#363636_15%,#343638_28%,#33393d_45%,#363736_59%,#333433_68%,#2c2c2c_75%,#212121_81%,#1a1a1a_87%,#181818_100%)] pb-[2px] pl-5 text-white">
          <button type="button" aria-label="Back, 3 unread chats" className="flex items-center gap-[22px] text-4xl text-[#1a98e0]">
            <svg viewBox="0 0 25 42" className="h-[42px] w-[25px]" fill="none" stroke="currentColor" strokeWidth="5" strokeLinecap="round" strokeLinejoin="round" aria-hidden="true">
              <path d="M22 3 L3 21 L22 39" />
            </svg>
            3
          </button>
          <div className="ml-[43px] flex items-center">
            <Logo />
            <h1 className="ml-[22px] text-[34px] font-semibold">Take App</h1>
            <span className="ml-2 flex">
              <VerifiedIcon />
            </span>
          </div>
        </header>

        <main className="relative isolate pb-[3px]">
          <Doodles />

          <section className="relative ml-[35px] flex h-[42px] w-[73.6%] flex-col justify-end overflow-x-visible overflow-y-clip rounded-br-[26px] bg-[#363638]">
            <ReplyButton>Edit (beta)</ReplyButton>
            <Tail />
          </section>

          <div className="mt-[78px] flex justify-center">
            <p className="flex h-[43px] w-[219px] items-center justify-center rounded-[18px] bg-[#1e1e1e]/95 text-[28px] font-semibold text-[#a3a3a5]">Today</p>
          </div>

          <div className="mt-[31px] flex h-[68px] items-center justify-center border-t border-[#3c3c3c] bg-[#2f2f2f]/64 pb-[6px] text-[32px] text-[#ebe8f5]">1 unread message</div>

          <article className="relative mt-[27px] ml-[35px] w-[73.6%] rounded-[26px] bg-[#363638] text-white">
            <div className="px-[22px] pt-[13px] text-[35px] leading-[48px] whitespace-pre">
              <p>Hi Ximena,</p>
              <p className="pl-[18px]">Here's your membership info for</p>
              <p>ABC Dinning.</p>
              <p className="pl-[18px]">Name: Ximena</p>
              <p className="flex pl-[18px]">
                {"Phone: "}
                <a href="tel:+8210" className="text-[#4aa9f8] underline decoration-2 underline-offset-4">
                  {"+82 10 "}
                </a>
                <span className="h-[42px] w-48 self-end bg-black" />
                <span className="h-[43px] w-[2px] border-b-2 border-[#4aa9f8]" />
              </p>
              <p className="pl-[18px]">Email: -</p>
              <p className="pl-[18px]">Birthday: -</p>
              <p className="pl-[18px]">You have ordered total 5 orders.</p>
              <p>Your store credit balance is ₩700.</p>
            </div>
            <div className="flex h-14 items-center justify-end px-6 text-[26px] text-[#98989f]">
              <time>2:47 PM</time>
            </div>
            <ReplyButton>Edit</ReplyButton>
            <ReplyButton>Order history</ReplyButton>
            <Tail />

            <svg viewBox="0 0 660 620" className="pointer-events-none absolute top-0 left-0 h-[620px] w-[660px]" fill="#e8260c" aria-hidden="true">
              <path d="M529.7 347.7 L561 298.7 L571.3 314 L638 270 L642.5 278 L576.7 321 L587 337.7 Z" />
              <path d="M248.7 466 L264.7 521.7 L245.7 519.3 L235.3 595.3 L226.7 594 L237.3 518.3 L218.3 515.7 Z" />
            </svg>
          </article>

          <ul className="mx-[53px] mt-[22px] flex flex-col gap-[13px]">
            {SUGGESTIONS.map((label) => (
              <li key={label}>
                <button type="button" className="flex h-[99px] w-full items-center justify-between rounded-[33px] bg-[#505050] pr-[43px] pl-[35px] text-[35px] text-white">
                  {label}
                  <SendIcon />
                </button>
              </li>
            ))}
          </ul>
        </main>
      </div>
    </div>
  );
}
